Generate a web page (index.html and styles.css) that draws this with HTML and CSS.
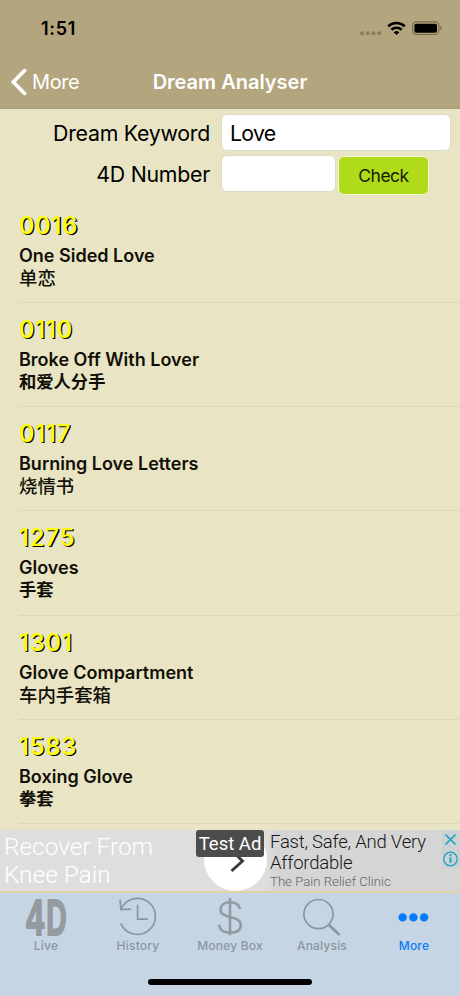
FILE: index.html
```html
<!DOCTYPE html>
<html lang="en">
<head>
    <meta charset="UTF-8">
    <meta name="viewport" content="width=device-width, initial-scale=1.0">
    <title>Dream Analyser</title>
    <link rel="stylesheet" href="styles.css">
</head>
<body>
    <div class="app">
        <!-- Status bar and navigation -->
        <header class="header">
            <div class="status-bar">
                <span class="time">1:51</span>
                <svg class="status-icons" width="84" height="18" viewBox="0 0 84 18">
                    <g fill="#8a7d60">
                        <circle cx="4" cy="13.2" r="2"/>
                        <circle cx="9.8" cy="13.2" r="2"/>
                        <circle cx="15.5" cy="13.2" r="2"/>
                        <circle cx="21.2" cy="13.2" r="2"/>
                    </g>
                    <g fill="none" stroke="#000" stroke-width="2.6">
                        <path d="M30.2 6.4a12 12 0 0 1 16.6 0"/>
                        <path d="M33.4 9.7a7.5 7.5 0 0 1 10.2 0"/>
                    </g>
                    <path d="M35.7 12.3a4.2 4.2 0 0 1 5.6 0l-2.8 2.8z"/>
                    <rect x="54.7" y="1.9" width="26.2" height="12.6" rx="3.6" fill="none" stroke="#74694e" stroke-width="1.1"/>
                    <rect x="56.4" y="3.7" width="22.6" height="9" rx="1.8"/>
                    <path d="M82.3 6.2c2 .7 2 3.4 0 4.1z" fill="#74694e"/>
                </svg>
            </div>
            <div class="nav-bar">
                <a class="back">
                    <svg width="16" height="28" viewBox="0 0 16 28">
                        <path d="M13.6 2.6L2.4 14l11.2 11.4" fill="none" stroke="#fff" stroke-width="3.6" stroke-linecap="round"/>
                    </svg>
                    <span>More</span>
                </a>
                <h1 class="title">Dream Analyser</h1>
            </div>
        </header>

        <!-- Search form -->
        <form class="search">
            <label class="label-keyword" for="keyword">Dream Keyword</label>
            <input type="text" id="keyword" class="keyword" value="Love">
            <label class="label-number" for="number">4D Number</label>
            <div class="number-row">
                <input type="text" id="number" class="number">
                <button type="button" class="check">Check</button>
            </div>
        </form>

        <!-- Results -->
        <ul class="results">
            <li class="result">
                <div class="digits">0016</div>
                <div class="name">One Sided Love</div>
                <div class="name-zh">单恋</div>
            </li>
            <li class="result">
                <div class="digits">0110</div>
                <div class="name">Broke Off With Lover</div>
                <div class="name-zh medium">和爱人分手</div>
            </li>
            <li class="result">
                <div class="digits">0117</div>
                <div class="name">Burning Love Letters</div>
                <div class="name-zh">烧情书</div>
            </li>
            <li class="result">
                <div class="digits">1275</div>
                <div class="name">Gloves</div>
                <div class="name-zh medium">手套</div>
            </li>
            <li class="result">
                <div class="digits">1301</div>
                <div class="name">Glove Compartment</div>
                <div class="name-zh">车内手套箱</div>
            </li>
            <li class="result">
                <div class="digits">1583</div>
                <div class="name">Boxing Glove</div>
                <div class="name-zh medium">拳套</div>
            </li>
        </ul>

        <!-- Ad banner -->
        <div class="ad">
            <div class="ad-headline">Recover From<br>Knee Pain</div>
            <div class="ad-arrow">
                <svg width="64" height="61" viewBox="0 0 64 61">
                    <circle cx="31.5" cy="29.5" r="31.5" fill="#fff"/>
                    <path d="M27.5 20.5L38.5 31 27.5 41" fill="none" stroke="#3c3c3e" stroke-width="3"/>
                </svg>
                <span class="ad-badge">Test Ad</span>
            </div>
            <div class="ad-copy">
                <div class="ad-text">Fast, Safe, And Very<br>Affordable</div>
                <div class="ad-brand">The Pain Relief Clinic</div>
            </div>
            <svg class="ad-choices" width="18" height="38" viewBox="0 0 18 38">
                <path d="M0 0h18v38H3l-3-4z" fill="#ccd1d2"/>
                <g fill="none" stroke="#19a5c3" stroke-width="1.6">
                    <path d="M3.5 4.5l10 10M13.5 4.5l-10 10"/>
                    <circle cx="8.5" cy="29" r="6.8" stroke-width="1.3"/>
                    <path d="M8.5 27.4v5.4M8.5 24.3v1.9" stroke-width="2"/>
                </g>
            </svg>
        </div>

        <!-- Tab bar -->
        <nav class="tab-bar">
            <a class="tab">
                <svg width="46" height="40" viewBox="0 0 46 40">
                    <text class="logo" y="37.5"><tspan x="3.2" textLength="18" lengthAdjust="spacingAndGlyphs">4</tspan><tspan x="23.2" textLength="20.5" lengthAdjust="spacingAndGlyphs">D</tspan></text>
                </svg>
                <span>Live</span>
            </a>
            <a class="tab">
                <svg width="46" height="40" viewBox="0 0 46 40" fill="none" stroke="#8a979f" stroke-width="1.7">
                    <path d="M5.8 12.5A18 18 0 1 1 5.8 26.3"/>
                    <path d="M5 2.7l1 10 10.2-.6M22.6 7.7v14.4h10.2"/>
                </svg>
                <span>History</span>
            </a>
            <a class="tab">
                <svg width="46" height="40" viewBox="0 0 46 40" fill="none" stroke="#909aa1" stroke-width="2.6">
                    <path d="M33 12C32 7.5 28.5 5.3 23 5.3S13.6 8.1 13.6 12.5c0 4.6 3.8 6 9.4 7.4 6.6 1.6 10.8 3.3 10.8 8.4 0 4.8-4.2 7.4-10.8 7.4-6.2 0-10.2-2.6-11-7.8M23 1.3v37"/>
                </svg>
                <span>Money Box</span>
            </a>
            <a class="tab">
                <svg width="46" height="40" viewBox="0 0 46 40" fill="none" stroke="#8a979f">
                    <circle cx="19.5" cy="17.1" r="14.6" stroke-width="1.7"/>
                    <path d="M29.5 27.5l11 10.5" stroke-width="2.7"/>
                </svg>
                <span>Analysis</span>
            </a>
            <a class="tab active">
                <svg width="46" height="40" viewBox="0 0 46 40" fill="#057cfb">
                    <circle cx="11.6" cy="20.4" r="4.2"/>
                    <circle cx="22.4" cy="20.4" r="4.2"/>
                    <circle cx="33.1" cy="20.4" r="4.2"/>
                </svg>
                <span>More</span>
            </a>
        </nav>
        <div class="home-bar"></div>
    </div>
</body>
</html>
```
FILE: styles.css
```css
* {
    box-sizing: border-box;
}

body {
    margin: 0;
    font-family: Inter, "Noto Sans CJK SC", sans-serif;
    background-color: #e9e5c4;
    color: #111008;
}

.app {
    display: flex;
    flex-direction: column;
    width: 460px;
    height: 996px;
    overflow: hidden;
}

.header {
    height: 109px;
    flex: none;
    background-color: #b3a57d;
    border-bottom: 1px solid #aaa078;
}

.status-bar {
    display: flex;
    justify-content: space-between;
    height: 54px;
    padding: 20px 18px 0 41px;
}

.time {
    font-size: 18px;
    line-height: 18px;
    font-weight: 600;
    color: #000;
    letter-spacing: 0.7px;
}

.nav-bar {
    display: grid;
    grid-template-columns: 1fr auto 1fr;
    align-items: center;
    height: 54px;
    padding: 1px 11px 0;
    color: #fff;
}

.back {
    display: flex;
    align-items: center;
    gap: 5px;
    font-size: 20px;
    letter-spacing: -0.4px;
}

.title {
    margin: 0;
    font-size: 20px;
    font-weight: 600;
    letter-spacing: 0;
}

.search {
    display: grid;
    grid-template-columns: 210px 230px;
    grid-template-rows: 37px 40px;
    column-gap: 11px;
    row-gap: 4px;
    flex: none;
    height: 89px;
    padding-top: 5px;
}

.search label {
    font-size: 21.3px;
    line-height: 38px;
    text-align: right;
    letter-spacing: -0.25px;
    color: #000;
}

.search input {
    height: 37px;
    padding: 0 8px;
    border: 1px solid #dcdac8;
    border-radius: 6px;
    background-color: #fff;
    font-family: inherit;
    font-size: 21.3px;
    letter-spacing: -0.7px;
    color: #000;
}

.search .keyword {
    width: 230px;
}

.number-row {
    display: flex;
    gap: 2px;
}

.search .number {
    width: 115px;
}

.check {
    width: 91px;
    height: 39px;
    margin-top: 1px;
    padding: 0;
    border: 1.5px solid #f4f8d4;
    border-radius: 6px;
    background-color: #afdb1b;
    font-family: inherit;
    font-size: 17.5px;
    letter-spacing: -0.5px;
    color: #151a02;
}

.results {
    flex: none;
    height: 632px;
    margin: 0;
    padding: 0.8px 0 0 19px;
    list-style: none;
    overflow: hidden;
}

.result {
    height: 104.2px;
    padding-top: 11px;
    border-bottom: 1px solid #dcd8ba;
}

.digits {
    font-size: 24px;
    line-height: 32px;
    font-weight: 500;
    letter-spacing: 0.8px;
    color: #ffff0a;
    text-shadow: 1.3px 1.3px 0 #000;
}

.name {
    font-size: 18px;
    line-height: 28px;
    font-weight: 600;
    letter-spacing: 0;
}

.name-zh {
    font-family: "Noto Sans CJK SC", sans-serif;
    font-size: 18.4px;
    line-height: 14px;
    font-weight: 500;
}

.name-zh.medium {
    font-size: 17.3px;
    font-weight: 700;
}

.ad {
    display: flex;
    flex: none;
    height: 61px;
    background: linear-gradient(90deg, #dedede 0, #dedede 58%, #d5d5d5 60%);
    font-family: Roboto, sans-serif;
}

.ad-headline {
    width: 204px;
    padding: 3px 0 0 4px;
    font-size: 24.4px;
    line-height: 28px;
    font-weight: 300;
    color: #fff;
}

.ad-arrow {
    position: relative;
    width: 64px;
}

.ad-badge {
    position: absolute;
    top: 0;
    left: -8px;
    width: 68px;
    height: 27px;
    border-radius: 3px;
    background-color: #4c4c4c;
    color: #fff;
    font-size: 18.5px;
    line-height: 28px;
    text-align: center;
}

.ad-copy {
    width: 174px;
    padding-left: 2px;
    white-space: nowrap;
}

.ad-text {
    padding-top: 2px;
    font-size: 18.5px;
    line-height: 20.5px;
    font-weight: 350;
    letter-spacing: -0.22px;
    color: #171717;
}

.ad-brand {
    font-size: 13.2px;
    line-height: 17px;
    font-weight: 300;
    color: #666;
}

.tab-bar {
    display: flex;
    flex: none;
    height: 87px;
    border-top: 2px solid #dfd3a9;
    background-color: #c6d5e4;
}

.tab {
    flex: 1;
    display: flex;
    flex-direction: column;
    align-items: center;
    padding-top: 4px;
    color: #8b979f;
    font-size: 12px;
    line-height: 17px;
    font-weight: 500;
    letter-spacing: 0.2px;
}

.tab.active {
    color: #057cfb;
}

.logo {
    font-family: "Liberation Sans", sans-serif;
    font-size: 50px;
    font-weight: 700;
    fill: #949a9e;
    stroke: #949a9e;
    stroke-width: 2px;
}

.home-bar {
    flex: 1;
    background: #c6d5e4;
}

.home-bar::before {
    content: "";
    display: block;
    width: 164px;
    height: 6px;
    margin: 1px auto 0;
    border-radius: 3px;
    background-color: #000;
}
```
